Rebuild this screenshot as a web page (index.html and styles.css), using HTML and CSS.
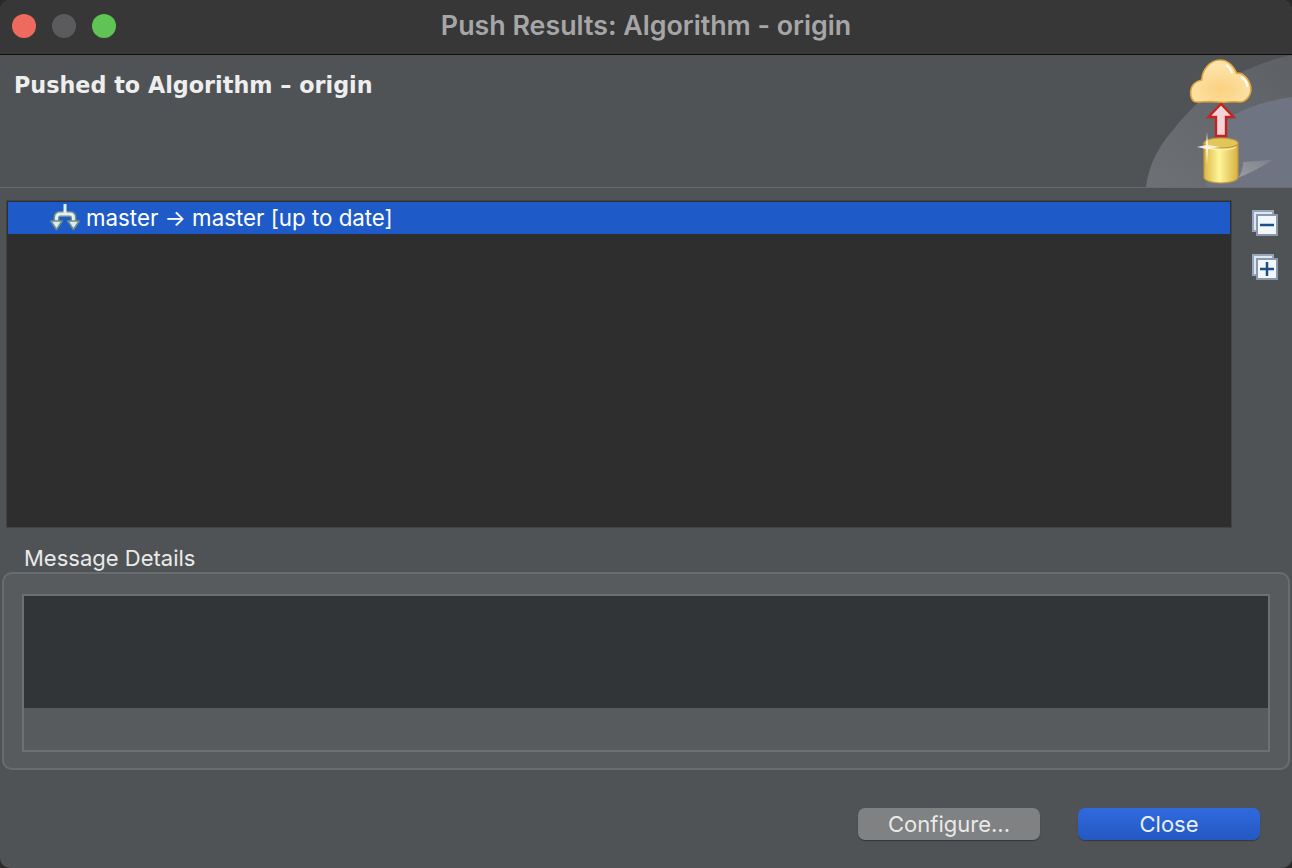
FILE: index.html
```html
<!DOCTYPE html>
<html lang="en">
<head>
<meta charset="UTF-8">
<meta name="viewport" content="width=device-width, initial-scale=1.0">
<title>Push Results: Algorithm - origin</title>
<link rel="stylesheet" href="styles.css">
</head>
<body>

<div class="window">
  <div class="titlebar">
    <div class="traffic">
      <span class="light red"></span>
      <span class="light grey"></span>
      <span class="light green"></span>
    </div>
    <div class="window-title">Push Results: Algorithm - origin</div>
  </div>

  <div class="banner">
    <h2 class="banner-title">Pushed to Algorithm – origin</h2>
    <svg class="banner-art" width="146" height="132" viewBox="0 0 146 132">
      <defs>
        <radialGradient id="cloudFill" cx="0.5" cy="0.7" r="0.6">
          <stop offset="0" stop-color="#fad17f"/>
          <stop offset="1" stop-color="#fde4ac"/>
        </radialGradient>
        <linearGradient id="canFill" x1="0" x2="1" y1="0" y2="0">
          <stop offset="0" stop-color="#dcb745"/>
          <stop offset="0.45" stop-color="#fdf59a"/>
          <stop offset="1" stop-color="#d9b040"/>
        </linearGradient>
        <linearGradient id="swoosh" x1="0" x2="1" y1="1" y2="0">
          <stop offset="0" stop-color="#6d7074"/>
          <stop offset="1" stop-color="#5d6166"/>
        </linearGradient>
        <linearGradient id="glow" x1="0" x2="1" y1="1" y2="0">
          <stop offset="0" stop-color="#9a9ca0"/>
          <stop offset="1" stop-color="#7e828c"/>
        </linearGradient>
      </defs>
      <path d="M0 132 C3 108 14 90 27 75 C42 56 62 36 84 23 C104 12 126 4 146 0 V132 Z" fill="url(#swoosh)"/>
      <path d="M60 132 C62 106 70 78 84 62 C100 52 124 45 146 42 V132 Z" fill="#6e7482"/>
      <path d="M92 123 C96 118 97 112 97 107 L126 105 C116 112 104 118 92 123 Z" fill="url(#glow)"/>
      <!-- cloud -->
      <path d="M51 47 C46 47 44.500 42 44.700 37 C45 30 50 26 55.700 25 C56 15 64 5 74 5 C81 5 87 10 90.700 18.300 C96 17 103 23 104.700 32 C106 40 100 47 94 47 C85 46 78 48 72 47 C64 46 58 47 51 47 Z" fill="url(#cloudFill)" stroke="#dfa53f" stroke-width="1.600"/>
      <path d="M95 22 C99 24 101 28 101.500 32" fill="none" stroke="#fff" stroke-width="2"/>
      <path d="M80 10 C83 12 85 15 86 18" fill="none" stroke="#fff" stroke-width="1.600"/>
      <!-- arrow -->
      <path d="M75 49 L62.500 62 H70 V81 H80 V62 H87.500 Z" fill="#f3d5d8" stroke="#c4231f" stroke-width="2.400"/>
      <!-- can -->
      <path d="M58 88 V122 C58 130 92 130 92 122 V88 Z" fill="url(#canFill)" stroke="#c2953c" stroke-width="1.200"/>
      <ellipse cx="75" cy="88" rx="17" ry="5" fill="#e3c65a" stroke="#c2953c" stroke-width="1.200"/>
      <path d="M60 92 C66 96 84 96 90 92" fill="none" stroke="#fff6b0" stroke-width="1"/>
      <path d="M61 77 L62 90 L74 92 L62 94 L61 110 L60 94 L51 92 L60 90 Z" fill="#fffdf0" opacity="0.85"/>
    </svg>
  </div>

  <div class="content">
    <div class="tree-row">
      <div class="tree">
        <div class="tree-item">
          <svg class="branch-icon" width="30" height="28" viewBox="0 0 30 28">
            <path d="M15 11 H10 Q6.500 11 6.500 15 V20 M15 11 H20 Q23.500 11 23.500 15 V20" fill="none" stroke="#6f8d8a" stroke-width="6"/>
            <path d="M15 1 V11 M15 11 H10 Q6.500 11 6.500 15 V20 M15 11 H20 Q23.500 11 23.500 15 V20" fill="none" stroke="#e3f0ee" stroke-width="3"/>
            <path d="M0.800 18 H12.200 L6.500 26.500 Z M17.800 18 H29.200 L23.500 26.500 Z" fill="#dcecea" stroke="#6f8d8a" stroke-width="1.600" stroke-linejoin="round"/>
          </svg>
          <span class="tree-label">master → master [up to date]</span>
        </div>
      </div>
      <div class="tree-tools">
        <svg width="26" height="26" viewBox="0 0 26 26">
          <rect x="1" y="1" width="20" height="20" fill="#d9e6f5" stroke="#98a5b8" stroke-width="2"/>
          <rect x="5" y="5" width="20" height="20" fill="#f2f7fc" stroke="#8c97aa" stroke-width="2"/>
          <path d="M8 15 H22" stroke="#1c4f86" stroke-width="2.500"/>
        </svg>
        <svg width="26" height="26" viewBox="0 0 26 26">
          <rect x="1" y="1" width="20" height="20" fill="#d9e6f5" stroke="#98a5b8" stroke-width="2"/>
          <rect x="5" y="5" width="20" height="20" fill="#f2f7fc" stroke="#8c97aa" stroke-width="2"/>
          <path d="M8 15 H22 M15 8 V22" stroke="#1c4f86" stroke-width="2.500"/>
        </svg>
      </div>
    </div>

    <div class="group-label">Message Details</div>
    <div class="group">
      <div class="details">
        <div class="details-text"></div>
      </div>
    </div>
  </div>

  <div class="buttons">
    <button class="btn">Configure...</button>
    <button class="btn btn-primary">Close</button>
  </div>
</div>

</body>
</html>
```

FILE: styles.css
```css
html, body {
  height: 100%;
}
body {
  margin: 0;
  background-color: #2a2a2a;
  font-family: Inter, "Noto Sans", sans-serif;
  color: #e9eaea;
}
.window {
  height: 868px;
  display: flex;
  flex-direction: column;
  background-color: #505355;
  border-radius: 10px;
  overflow: hidden;
}
.titlebar {
  height: 55px;
  flex-shrink: 0;
  display: flex;
  align-items: center;
  justify-content: center;
  position: relative;
  padding-bottom: 4px;
  box-sizing: border-box;
  background-color: #373738;
  border-bottom: 1px solid #0e0e0e;
}
.traffic {
  position: absolute;
  left: 12px;
  top: 14px;
  display: flex;
  gap: 16px;
}
.light {
  width: 24px;
  height: 24px;
  border-radius: 50%;
}
.red {
  background-color: #ee6a5f;
}
.grey {
  background-color: #5b5b5d;
}
.green {
  background-color: #5fc454;
}
.window-title {
  font-size: 26.800px;
  font-weight: 600;
  color: #a6a6a7;
}
.banner {
  height: 132px;
  flex-shrink: 0;
  display: flex;
  justify-content: space-between;
  border-bottom: 1px solid #696c6e;
}
.banner-title {
  margin: 15px 0 0 14px;
  font-family: "DejaVu Sans", sans-serif;
  font-size: 22.300px;
  line-height: 30px;
  font-weight: 700;
  color: #eeeeee;
}
.banner-art {
  display: block;
  flex-shrink: 0;
}
.content {
  flex: 1;
  padding: 12px 2px 0;
}
.tree-row {
  display: flex;
  margin-left: 4px;
}
.tree {
  width: 1226px;
  height: 328px;
  box-sizing: border-box;
  padding: 1px;
  background-color: #2e2e2e;
  border: 1px solid #414446;
}
.tree-item {
  height: 32px;
  display: flex;
  align-items: center;
  gap: 6px;
  padding-left: 42px;
  background-color: #1f5bc8;
  color: #fff;
  font-size: 22.300px;
}
.tree-label {
  padding-bottom: 2px;
}
.branch-icon {
  display: block;
  margin-bottom: 2px;
}
.tree-tools {
  display: flex;
  flex-direction: column;
  gap: 18px;
  padding: 10px 0 0 20px;
}
.tree-tools svg {
  display: block;
}
.group-label {
  margin: 17px 0 1px 22px;
  font-size: 22px;
  line-height: 26px;
}
.group {
  height: 198px;
  box-sizing: border-box;
  padding: 20px 18px 16px;
  background-color: #585b5d;
  border: 2px solid #696c6e;
  border-radius: 10px;
}
.details {
  height: 158px;
  box-sizing: border-box;
  background-color: #585b5d;
  border: 2px solid #6d7072;
}
.details-text {
  height: 112px;
  background-color: #323537;
}
.buttons {
  height: 98px;
  flex-shrink: 0;
  display: flex;
  justify-content: flex-end;
  gap: 38px;
  padding: 38px 32px 0 0;
  box-sizing: border-box;
}
.btn {
  width: 182px;
  height: 32px;
  padding: 0;
  border: none;
  border-radius: 7px;
  background-color: #7f8182;
  box-shadow: 0 1px 1px rgba(0, 0, 0, 0.35);
  color: #e9eaea;
  font-family: Inter, "Noto Sans", sans-serif;
  font-size: 22px;
}
.btn-primary {
  background: linear-gradient(#2f6ade, #2458c2);
  color: #e9eefa;
}
```
